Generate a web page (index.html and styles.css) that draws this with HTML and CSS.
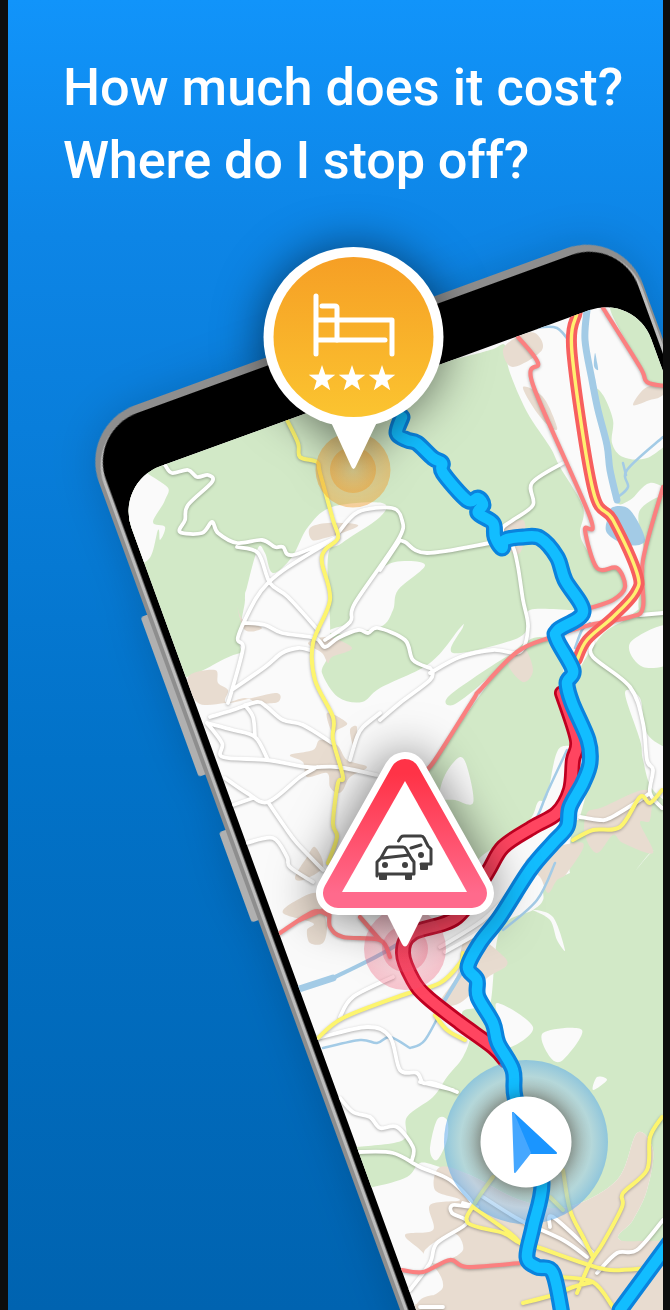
FILE: index.html
```html
<!DOCTYPE html>
<html lang="en">
<head>
<meta charset="utf-8">
<title>How much does it cost?</title>
<link rel="stylesheet" href="styles.css">
</head>
<body>
<div class="frame">
  <main class="stage">
    <h1 class="headline"><span>How much does it cost?</span><span class="tight">Where do I stop off?</span></h1>
    <svg class="scene" viewBox="8 0 655 1310" aria-hidden="true">
      <defs>
        <clipPath id="screen-clip"><rect x="-57" y="493" width="553" height="1200" rx="48" transform="rotate(-20)"/></clipPath>
        <linearGradient id="orange" x1="0" y1="0" x2="0" y2="1"><stop offset="0" stop-color="#f69f25"/><stop offset="1" stop-color="#fbc430"/></linearGradient>
        <linearGradient id="alert" x1="0" y1="0" x2="0" y2="1"><stop offset="0" stop-color="#ff3347"/><stop offset="1" stop-color="#ff6a8c"/></linearGradient>
        <radialGradient id="halo"><stop offset="0.55" stop-color="#8a96a5" stop-opacity=".55"/><stop offset="0.8" stop-color="#98c6ec" stop-opacity=".5"/><stop offset="1" stop-color="#5aa9ec" stop-opacity=".55"/></radialGradient>
        <radialGradient id="pulse-o"><stop offset="0" stop-color="#f0a030" stop-opacity=".2"/><stop offset="1" stop-color="#f2a030" stop-opacity=".48"/></radialGradient>
        <radialGradient id="pulse-r"><stop offset="0" stop-color="#ff4f70" stop-opacity=".12"/><stop offset="1" stop-color="#f0506e" stop-opacity=".32"/></radialGradient>
      </defs>

      <g class="phone" transform="rotate(-20)">
        <rect class="side-btn" x="-79" y="628" width="12" height="170" rx="3"/>
        <rect class="side-btn" x="-79" y="857" width="12" height="96" rx="3"/>
        <rect class="rim-dark" x="-72" y="427" width="579" height="1200" rx="60"/>
        <rect class="rim-light" x="-68" y="435" width="573" height="1200" rx="56"/>
        <rect class="bezel" x="-64.5" y="435" width="566.5" height="1200" rx="52"/>
      </g>

      <g clip-path="url(#screen-clip)" id="map"></g>

      <!-- position marker -->
      <circle class="halo" cx="526" cy="1142" r="82" fill="url(#halo)"/>
      <g clip-path="url(#screen-clip)" id="route"></g>
      <g class="shadow-soft">
        <circle class="white" cx="526" cy="1142" r="45.5"/>
      </g>
      <polygon class="arrow-dark" points="513,1113 556,1153 530,1153"/>
      <polygon class="arrow-light" points="513,1113 530,1153 515,1172"/>

      <!-- traffic marker -->
      <circle cx="405" cy="949" r="41" fill="url(#pulse-r)"/>
      <circle cx="405" cy="949" r="23" fill="url(#pulse-r)"/>
      <g class="shadow-big">
        <polygon class="white-tri" points="405,774 338,893 472,893"/>
        <path class="white" d="M387,914 L423,914 L408,944 Q405,949 402,944 Z"/>
      </g>
      <polygon class="red-tri" points="405,774 338,893 472,893" fill="url(#alert)" stroke="url(#alert)"/>
      <polygon class="white" points="405,781 342,892 467,892"/>
      <g class="cars">
        <path d="M398.5,841 L401,837 Q402,836 404,836 H421 Q423,836 424,838 L428,846 L431,849 V864 H421"/>
        <path d="M411,848 L421,845"/>
        <rect class="car-fill" x="420" y="864" width="8" height="6" rx="1"/>
        <circle class="car-fill" cx="421" cy="855" r="3"/>
        <path class="car-front" d="M377,876 V862 L381,858 L386,849 Q387,847 389,847 H403 Q405,847 406,849 L411,858 L414,862 V874 H377 Z"/>
        <path d="M383,858 L409,855"/>
        <rect class="car-fill" x="379" y="873" width="8" height="7" rx="1"/>
        <rect class="car-fill" x="405" y="873" width="7" height="7" rx="1"/>
        <circle class="car-fill" cx="385" cy="865" r="3"/>
        <circle class="car-fill" cx="405" cy="865" r="3"/>
      </g>

      <!-- hotel marker -->
      <circle cx="353" cy="470" r="37.5" fill="url(#pulse-o)"/>
      <circle cx="353" cy="470" r="23" fill="url(#pulse-o)"/>
      <g class="shadow-big">
        <circle class="white" cx="353.5" cy="337" r="90"/>
        <path class="white" d="M330,420 L378,420 L356,466 Q353.500,472 351,466 Z"/>
      </g>
      <circle cx="353.5" cy="337" r="80" fill="url(#orange)"/>
      <g class="bed">
        <path d="M316,296 V354"/>
        <path d="M322,306 H335 Q337,306 337,308 V340"/>
        <path d="M318,320 H392 V354"/>
        <path d="M318,340 H385"/>
      </g>
      <path class="white" d="M322,365 L325.300,374.400 L335.300,374.700 L327.400,380.700 L330.200,390.200 L322,384.600 L313.800,390.200 L316.600,380.700 L308.700,374.700 L318.700,374.400 Z"/>
      <path class="white" d="M352,365 L355.300,374.400 L365.300,374.700 L357.400,380.700 L360.200,390.200 L352,384.600 L343.800,390.200 L346.600,380.700 L338.700,374.700 L348.700,374.400 Z"/>
      <path class="white" d="M382,365 L385.300,374.400 L395.300,374.700 L387.400,380.700 L390.200,390.200 L382,384.600 L373.800,390.200 L376.600,380.700 L368.700,374.700 L378.700,374.400 Z"/>
    </svg>
  </main>
</div>
<script src="map.js"></script>
</body>
</html>
```

FILE: styles.css
```css
* { box-sizing: border-box; }
html, body { margin: 0; height: 100%; background: #0d0d0d; }
.frame { width: 670px; height: 1310px; padding: 0 7px 0 8px; overflow: hidden; }
.stage {
  position: relative;
  height: 100%;
  overflow: hidden;
  background: linear-gradient(180deg, #1194fa 0%, #0d85e6 18%, #0272c8 58%, #0063b0 100%);
}
.headline {
  position: relative;
  z-index: 2;
  margin: 0;
  padding: 51px 0 0 55px;
  color: #fff;
  font: 500 52.3px/73px Roboto, sans-serif;
}
.headline span { display: block; white-space: nowrap; }
.headline .tight { letter-spacing: -0.2px; }
.scene { position: absolute; left: 0; top: 0; width: 655px; height: 1310px; display: block; }

.phone { filter: drop-shadow(0 0 22px rgba(0, 0, 0, .16)); }
.side-btn { fill: #b0b0b0; }
.rim-dark { fill: #8e8e8e; }
.rim-light { fill: #bdbdbd; }
.bezel { fill: #000; }

.white { fill: #fff; }
.white-tri { fill: #fff; stroke: #fff; stroke-width: 44; stroke-linejoin: round; }
.red-tri { stroke-width: 30; stroke-linejoin: round; }
.shadow-big { filter: drop-shadow(0 2px 24px rgba(0, 0, 0, .55)); }
.shadow-soft { filter: drop-shadow(0 0 9px rgba(0, 0, 0, .4)); }
.arrow-dark { fill: #1a95ff; stroke: #1a95ff; stroke-width: 2; stroke-linejoin: round; }
.arrow-light { fill: #45a7ff; stroke: #45a7ff; stroke-width: 2; stroke-linejoin: round; }

.bed path { fill: none; stroke: #fff; stroke-width: 5; stroke-linecap: round; stroke-linejoin: round; }
.cars path { fill: none; stroke: #404040; stroke-width: 3; stroke-linejoin: round; stroke-linecap: round; }
.cars .car-front { fill: #fff; }
.car-fill { fill: #404040; }

/* map layers, filled in by map.js */
.land { fill: #fafafa; }
.green { fill: #d2e9c7; }
.blank { fill: #fafafa; }
.tan { fill: #e8dcd0; }
.lake { fill: #a3cbe6; }
.line { fill: none; stroke-linecap: round; stroke-linejoin: round; }
.river-s { stroke: #a3cbe6; stroke-width: 2.5; }
.river-m { stroke: #a3cbe6; stroke-width: 4; }
.river-l { stroke: #a3cbe6; stroke-width: 7; }
.road { stroke: #fff; stroke-width: 3.8; }
.yellow { stroke: #fdf56e; stroke-width: 4; }
.pink { stroke: #fb8080; stroke-width: 4.2; }
.hw-out { stroke: #f75f5f; stroke-width: 11; }
.hw-in { stroke: #fff070; stroke-width: 3.4; }
.red-out { stroke: #bf0021; stroke-width: 16; }
.red-in { stroke: #ff4560; stroke-width: 10.500; }
.route-out { stroke: #0a83dd; stroke-width: 17; }
.route-in { stroke: #12bdff; stroke-width: 10.500; }
.casted { filter: drop-shadow(0 1px 1.5px rgba(0, 0, 0, .3)); }
```

FILE: map.js
```js
// Draws the map on the phone screen from traced coordinates.
const SVG_NS = 'http://www.w3.org/2000/svg';

const AREAS = [
  ['land', ['-100,300 800,300 800,1400 -100,1400']],
  ['green', [
    '60,520 200,420 443,362 490,350 505,345 509,370 527,412 550,447 560,467 583,507 580,533 587,550 600,570 618,567 625,587 613,600 587,608 573,610 530,610 528,627 513,640 453,653 463,627 460,628 430,663 380,688 362,702 338,697 322,673 322,653 245,652 187,677 100,700',
    '453,705 450,695 510,655 480,685',
    '437,757 513,653 550,640 566,680 580,740 558,750 547,797 538,802 527,823 483,855 473,862 440,830 423,780',
    '593,647 620,623 680,611 680,860 655,850 633,873 617,880 587,867 570,873 573,820 580,817 590,760 575,690',
    '500,930 533,910 543,900 545,885 570,873 587,867 617,880 633,873 655,850 680,850 680,1248 620,1240 633,1220 647,1190 653,1150 637,1133 617,1180 567,1207 520,1200 470,1175 440,1167 420,1163 407,1177 373,1187 340,1190 330,1150 357,1147 403,1140 407,1117 433,1097 447,1077 463,1057 470,1035 462,1013 475,1008 490,1005',
    '610,308 640,318 680,385 647,380 640,365',
    '595,393 603,395 613,420 612,443 623,457 647,458 680,440 680,490 650,483 630,500 615,500 605,450',
    '640,510 680,503 680,612 640,612 645,560'
  ]],
  ['blank', [
    '120,470 165,485 165,500 153,522 165,527 160,540 158,530 148,560 120,560',
    '245,655 245,600 247,587 258,548 265,553 273,573 292,557 308,527 332,507 382,503 380,517 342,543 328,557 330,632 322,655',
    '330,630 350,622 352,607 375,575 395,562 425,565 398,590 393,610 380,627 338,634',
    '460,757 468,770 473,803 455,800 440,797 445,775',
    '625,693 640,698 648,735 680,760 680,805 653,790 643,760 640,740',
    '630,643 670,625 675,660 643,667',
    '533,910 553,917 565,950 557,940 550,920',
    '497,1003 533,1027 510,1047 503,1030',
    '543,1033 582,1030 563,1060 550,1057',
    '597,1077 607,1080 593,1090',
    '437,1120 447,1120 447,1140 437,1160 430,1150'
  ]],
  ['tan', [
    '188,677 215,670 218,683 228,690 228,703 275,693 278,702 258,703 245,698 225,703 198,703',
    '310,528 328,523 358,525 342,533 325,538 312,540',
    '237,605 243,620 262,628 245,630',
    '308,643 328,637 352,648 332,657 328,663 322,653',
    '290,755 313,750 320,740 337,745 347,760 367,767 350,777 343,790 337,793 330,787 327,773 307,777 303,762',
    '327,713 347,723 337,730 333,735',
    '350,730 357,727 354,747',
    '307,857 315,847 323,867 303,880 295,877',
    '283,913 297,900 317,893 323,910 327,927 323,943 310,943 307,930 313,923',
    '525,863 540,852 583,843 567,873 557,880 548,893 540,877',
    '587,813 603,807 647,790 650,820 640,823 653,853 623,843 613,835 597,853 585,835',
    '463,943 477,937 500,953 507,965 487,978 460,1003 440,1003 457,975',
    '440,1167 470,1175 520,1200 567,1207 617,1180 637,1133 653,1150 647,1190 633,1220 620,1240 680,1248 680,1320 415,1320 443,1287 425,1255 405,1235 433,1230 430,1205 460,1200 435,1190',
    '407,1340 420,1300 450,1300 440,1340',
    '503,350 517,337 535,333 542,350 513,367',
    '523,387 543,397 557,427 550,427 535,410',
    '633,405 647,387 670,387 660,397 650,400',
    '508,663 523,647 533,670 523,682',
    '487,537 523,520 520,553 500,545'
  ]],
  ['blank', ['425,1250 453,1233 463,1250 443,1262 430,1262']],
  ['lake', [
    '613,507 630,510 645,540 627,545 607,533 608,517',
    '595,353 597,362 598,370 594,366'
  ]]
];

const LINES = [
  ['river-s', [
    '533,328 557,328 573,347',
    '663,437 627,470 628,487 618,497',
    '623,463 626,475',
    '627,545 640,575',
    '590,623 582,630 575,648',
    '567,750 547,793 537,817 520,840',
    '555,863 537,900 503,930',
    '410,1048 390,1037 377,1043 360,1040 323,1048',
    '445,1003 425,1040 410,1048'
  ]],
  ['river-m', ['463,970 443,1003', '333,978 383,953 437,920']],
  ['river-l', ['587,310 585,340 592,380 598,410 607,445 610,470 617,500', '290,992 333,978']],
  ['road', [
    '165,465 172,473 188,470 197,477 208,475 212,482 188,505 185,520 180,532 202,533 212,522 218,533 237,543 262,540 275,547 283,547 293,555 338,537',
    '237,547 258,553 270,583 288,597 318,630',
    '338,533 358,512 392,508 402,520 398,540 355,603 350,622 325,640',
    '398,540 405,542 427,553 490,543',
    '400,540 380,570',
    '337,537 288,567 268,583 255,600 238,637 243,648 232,690 228,703',
    '245,623 265,625 282,633 315,638 325,647 338,638 358,630 368,633 378,628 405,640 413,660 430,668',
    '232,690 265,667 282,653 298,648 310,650',
    '430,673 460,657 493,650 520,652 528,627 523,600 518,567 513,547 502,530 513,520 533,505 532,483 563,463',
    '432,670 430,680 400,703 380,720',
    '210,717 233,710 257,702 267,707 283,720 303,725 332,743',
    '207,723 233,730 255,737 267,758',
    '245,705 253,717 255,737',
    '207,723 222,743 223,757 267,760 307,767 337,767 377,775',
    '225,778 247,793 268,802 300,777 317,767',
    '233,805 253,798',
    '268,802 285,827 297,843 323,870',
    '247,843 273,838 287,857 290,867 313,882',
    '350,760 357,737 363,727 380,713',
    '340,1017 353,997 393,977',
    '318,1038 367,1027 390,1037 400,1070 417,1073 423,1083 433,1083 457,1092',
    '420,1082 453,1090',
    '340,1098 353,1112 370,1117 380,1128 397,1127 413,1147 412,1160',
    '358,1152 393,1153 420,1167 450,1180 473,1205 453,1205 452,1213 467,1223 437,1243 430,1263 410,1290',
    '463,1203 477,1207',
    '550,1227 553,1217 593,1253',
    '483,1197 520,1220 563,1240 587,1257',
    '663,1220 637,1250 617,1253 597,1273',
    '420,1307 443,1307',
    '593,643 593,657 630,687 643,723 647,760 653,770 650,793 662,808',
    '650,793 640,800 610,818 600,820 580,817',
    '663,613 640,615',
    '440,947 483,920 513,890',
    '445,952 490,925 520,895'
  ]],
  ['yellow', [
    '287,420 298,443 300,457 317,462 320,473 333,520 338,538 325,550 322,563 330,600 313,643 315,680 333,717 333,740 343,777 338,783 333,823 337,837 328,863',
    '318,1038 343,1018 403,995 440,983 460,963 463,953',
    '573,840 593,830 620,827 640,797 650,803 662,790',
    '435,1015 447,1030 465,1040',
    '493,1177 475,1203 468,1223 503,1233 520,1243 537,1247 583,1263 610,1270 647,1268',
    '473,1207 510,1233 520,1243',
    '662,1117 650,1137 647,1170 623,1193 622,1207 603,1243 590,1263 577,1293',
    '563,1170 570,1210 583,1237 593,1257',
    '550,1197 563,1210',
    '560,1277 593,1282 613,1307',
    '523,1303 553,1295 573,1287 593,1282'
  ]],
  ['pink', [
    '603,308 640,367 647,382 665,386',
    '518,337 538,363 533,385 590,517 585,530 597,568 617,568 625,587 613,600 590,608',
    '663,487 643,560 643,607 630,617 590,625 552,637 517,652 480,690 473,700 437,757 427,770',
    '280,933 313,912 328,915',
    '300,920 327,910 330,927 343,937 380,940 390,957',
    '360,917 380,940',
    '402,1270 423,1272 450,1260 467,1267 520,1263'
  ]],
  ['hw-out', ['577,313 572,353 593,490 613,520 637,573 635,593 613,617 587,640 577,660']],
  ['hw-in', ['577,313 572,353 593,490 613,520 637,573 635,593 613,617 587,640 577,660']],
  ['red-out', ['562,693 577,740 573,760 570,790 557,813 533,827 503,847 487,873 457,917 413,933 403,953 413,980 427,997 460,1023 493,1047 505,1060']],
  ['red-in', ['562,693 577,740 573,760 570,790 557,813 533,827 503,847 487,873 457,917 413,933 403,953 413,980 427,997 460,1023 493,1047 505,1060']]
];

const ROUTE = [
  '402,417 397,433 407,440 417,443 433,458 442,463 443,473 467,500 478,498 483,505 478,513 493,523 495,537 502,548 505,540 523,537 540,538 557,557 565,580 583,612 558,630 557,640 573,670 567,683 572,703 588,740 590,763 583,783 570,807 567,827 553,843 530,870 500,917 480,943 468,967 477,980 478,997 493,1023 498,1043 513,1070 515,1097 530,1140',
  '530,1140 542,1183 533,1227 527,1257 537,1267 553,1273 563,1320',
  '670,1242 620,1310'
];

function toPath(text, closed) {
  const pts = text.trim().split(/\s+/).map(p => p.split(',').map(Number));
  const n = pts.length;
  const at = i => closed ? pts[(i + n) % n] : pts[Math.max(0, Math.min(n - 1, i))];
  let d = 'M' + pts[0].join(',');
  for (let i = 0; i < (closed ? n : n - 1); i++) {
    const [a, b, c, e] = [at(i - 1), at(i), at(i + 1), at(i + 2)];
    const c1 = [b[0] + (c[0] - a[0]) / 6, b[1] + (c[1] - a[1]) / 6];
    const c2 = [c[0] - (e[0] - b[0]) / 6, c[1] - (e[1] - b[1]) / 6];
    d += 'C' + [c1, c2, c].map(q => q.map(v => v.toFixed(1)).join(',')).join(' ');
  }
  return closed ? d + 'Z' : d;
}

function addPath(parent, cls, d) {
  const el = document.createElementNS(SVG_NS, 'path');
  el.setAttribute('class', cls);
  el.setAttribute('d', d);
  parent.appendChild(el);
}

const map = document.getElementById('map');
for (const [cls, shapes] of AREAS) {
  addPath(map, cls, shapes.map(s => toPath(s, true)).join(''));
}
for (const [cls, shapes] of LINES) {
  const g = document.createElementNS(SVG_NS, 'g');
  if (cls === 'road' || cls === 'yellow' || cls === 'pink') g.setAttribute('class', 'casted');
  addPath(g, 'line ' + cls, shapes.map(s => toPath(s, false)).join(''));
  map.appendChild(g);
}
const route = document.getElementById('route');
const routeD = ROUTE.map(s => toPath(s, false)).join('');
addPath(route, 'line route-out', routeD);
addPath(route, 'line route-in', routeD);
```
